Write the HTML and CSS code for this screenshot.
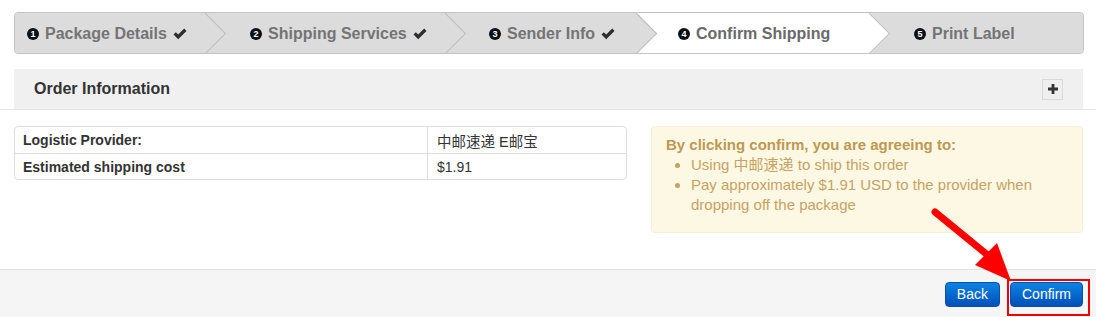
FILE: index.html
```html
<!DOCTYPE html>
<html>
<head>
<meta charset="utf-8">
<link rel="stylesheet" href="styles.css">
</head>
<body>
<div class="page">
  <div class="wizard">
    <div class="step s1"><span class="num">1</span><span class="label">Package Details</span><svg class="check" viewBox="0 0 14 12"><path d="M0.5 6.5 L2.8 4.2 L5.2 6.6 L11.2 0.6 L13.5 2.9 L5.2 11.2 Z"/></svg></div>
    <div class="step s2"><span class="num">2</span><span class="label">Shipping Services</span><svg class="check" viewBox="0 0 14 12"><path d="M0.5 6.5 L2.8 4.2 L5.2 6.6 L11.2 0.6 L13.5 2.9 L5.2 11.2 Z"/></svg></div>
    <div class="step s3"><span class="num">3</span><span class="label">Sender Info</span><svg class="check" viewBox="0 0 14 12"><path d="M0.5 6.5 L2.8 4.2 L5.2 6.6 L11.2 0.6 L13.5 2.9 L5.2 11.2 Z"/></svg></div>
    <div class="step s4 active"><span class="num">4</span><span class="label">Confirm Shipping</span></div>
    <div class="step s5 last"><span class="num">5</span><span class="label">Print Label</span></div>
  </div>

  <div class="section-head">
    <div class="head-box">
      <h2 class="head-title">Order Information</h2>
      <span class="plus"><svg viewBox="0 0 10 10"><path d="M3.6 0 H6.4 V3.6 H10 V6.4 H6.4 V10 H3.6 V6.4 H0 V3.6 H3.6 Z"/></svg></span>
    </div>
  </div>

  <div class="content">
    <table class="info">
      <tr><th>Logistic Provider:</th><td class="cjk">中邮速递 E邮宝</td></tr>
      <tr><th>Estimated shipping cost</th><td>$1.91</td></tr>
    </table>
    <div class="alert">
      <div class="alert-title">By clicking confirm, you are agreeing to:</div>
      <ul class="alert-list">
        <li>Using <span class="cjk">中邮速递</span> to ship this order</li>
        <li>Pay approximately $1.91 USD to the provider when dropping off the package</li>
      </ul>
    </div>
  </div>

  <div class="footer">
    <button class="btn">Back</button>
    <button class="btn">Confirm</button>
  </div>

  <svg class="annot-arrow" width="1096" height="317" viewBox="0 0 1096 317">
    <line x1="935" y1="212" x2="990" y2="257" stroke="#ff0000" stroke-width="7" stroke-linecap="round"/>
    <polygon points="1011,281 975,265 997,243" fill="#ff0000"/>
  </svg>
  <div class="annot-box"></div>
</div>
</body>
</html>
```

FILE: styles.css
```css
* { box-sizing: border-box; }
html, body { margin: 0; padding: 0; background: #fff; }
body {
  font-family: "Liberation Sans", Arial, "Noto Sans CJK SC", sans-serif;
  font-size: 14px;
  color: #333;
  width: 1096px;
  height: 317px;
  overflow: hidden;
}
.page { position: relative; width: 1096px; height: 317px; padding-top: 12px; }

.wizard {
  margin: 0 12px 0 14px;
  height: 42px;
  border: 1px solid #c4c4c4;
  border-radius: 4px;
  background: #dcdcdc;
  display: flex;
  overflow: hidden;
}
.step {
  position: relative;
  height: 40px;
  display: flex;
  align-items: center;
  padding-left: 44px;
  padding-top: 2px;
  background: #dcdcdc;
  font-size: 16px;
  font-weight: bold;
  color: #747474;
  flex: none;
}
.step::after {
  content: "";
  position: absolute;
  z-index: 2;
  top: 5.86px;
  right: -14.14px;
  width: 28.28px;
  height: 28.28px;
  background: inherit;
  border-top: 1px solid #bdbdbd;
  border-right: 1px solid #bdbdbd;
  transform: rotate(45deg);
}
.step.last::after { display: none; }
.s1 { width: 191px; padding-left: 12px; }
.s2 { width: 240px; }
.s3 { width: 191px; padding-left: 43px; }
.s4 { width: 233px; padding-left: 41px; }
.s5 { flex: 1; }
.step.active { background: #fff; color: #6a6a6a; }

.num {
  width: 12px;
  height: 12px;
  border-radius: 50%;
  background: #0c1118;
  color: #fff;
  font-size: 9px;
  font-weight: bold;
  line-height: 12px;
  text-align: center;
  margin-right: 6px;
  flex: none;
}
.label { position: relative; z-index: 3; }
.check { width: 14px; height: 12px; margin-left: 6px; fill: #2e2e2e; position: relative; z-index: 3; }

.section-head {
  margin-top: 15px;
  padding: 0 13px 0 14px;
  border-bottom: 1px solid #e6e6e6;
}
.head-box {
  height: 40px;
  background: #f0f0f0;
  display: flex;
  align-items: center;
  justify-content: space-between;
  padding: 0 20px 0 20px;
}
.head-title {
  margin: 0;
  font-size: 16px;
  font-weight: bold;
  color: #333;
}
.plus {
  width: 21px;
  height: 21px;
  border: 1px solid #dadada;
  background: #efefef;
  display: flex;
  align-items: center;
  justify-content: center;
}
.plus svg { width: 10px; height: 10px; fill: #333; }

.content {
  display: grid;
  grid-template-columns: 613px 432px;
  column-gap: 24px;
  padding: 16px 13px 0 14px;
  height: 159px;
  align-items: start;
}
.info {
  width: 613px;
  border-collapse: separate;
  border-spacing: 0;
  border: 1px solid #dddddd;
  border-radius: 4px;
}
.info th, .info td {
  height: 26px;
  padding: 0 8px;
  text-align: left;
  vertical-align: middle;
  font-size: 14px;
  color: #333;
}
.info th { width: 413px; font-weight: bold; border-right: 1px solid #dddddd; }
.info td { padding-left: 9px; }
.info td.cjk { font-size: 14.5px; }
.info tr + tr th, .info tr + tr td { border-top: 1px solid #dddddd; }
.cjk { font-family: "Liberation Sans", "Noto Sans CJK SC", sans-serif; }

.alert {
  background: #fcf8e3;
  border: 1px solid #fbeed5;
  border-radius: 4px;
  padding: 8px 14px 17px 14px;
  color: #c09853;
  line-height: 20px;
  font-size: 15px;
}
.alert-title { font-weight: bold; }
.alert-list { margin: 0; padding-left: 25px; color: #c8a262; }

.footer {
  height: 48px;
  border-top: 1px solid #e2e2e2;
  background: #f5f5f5;
  display: flex;
  justify-content: flex-end;
  align-items: flex-start;
  gap: 10px;
  padding: 12px 13px 0 0;
}
.btn {
  height: 25px;
  padding: 0 11px;
  border: 1px solid #0a4fa8;
  border-radius: 4px;
  background: linear-gradient(to bottom, #0c83e4, #0050b8);
  color: #fff;
  font-family: "Liberation Sans", Arial, sans-serif;
  font-size: 14px;
  line-height: 23px;
}

.annot-arrow { position: absolute; left: 0; top: 0; pointer-events: none; }
.annot-box {
  position: absolute;
  left: 1007px;
  top: 279px;
  width: 83px;
  height: 37px;
  border: 2px solid #f00000;
}
```
